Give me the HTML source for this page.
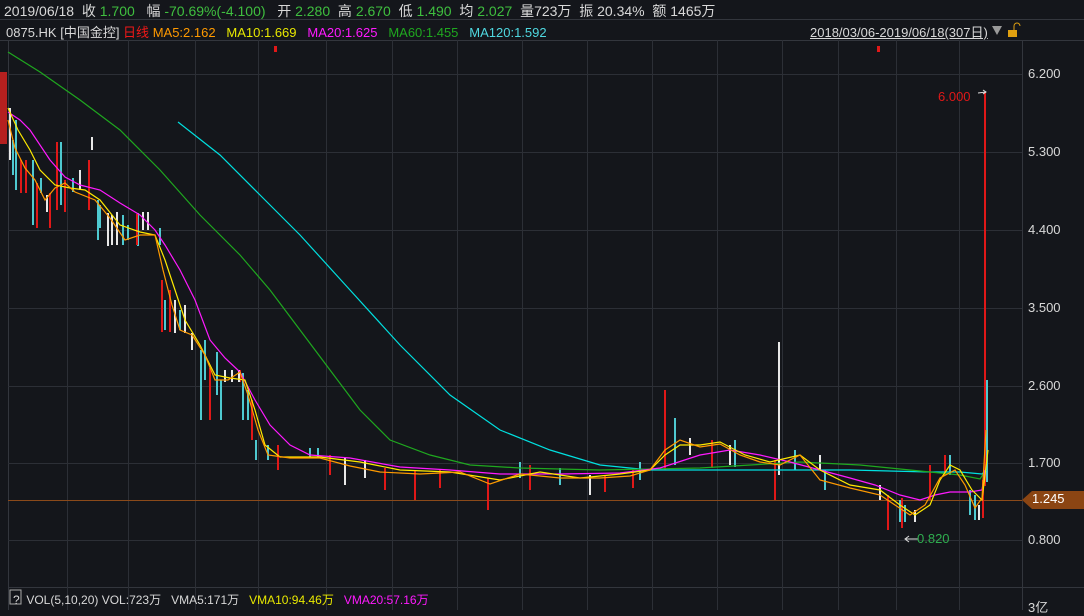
<!DOCTYPE html>
<html><head><meta charset="utf-8"><style>
body{margin:0;width:1084px;height:610px;background:#14161b;overflow:hidden;font-family:"Liberation Sans","Noto Sans CJK SC",sans-serif;color:#d8d8d8;position:relative}
.t{position:absolute;white-space:nowrap}
.g{color:#3fbf3f}
.ax{font-size:13px;left:1028px}
</style></head><body>
<svg width="1084" height="610" style="position:absolute;left:0;top:0">
<g stroke="#33363d" stroke-width="1">
<line x1="0" y1="19.5" x2="1084" y2="19.5"/>
<line x1="0" y1="40.5" x2="1084" y2="40.5"/>
<line x1="8.5" y1="40" x2="8.5" y2="610"/>
<line x1="1022.5" y1="40" x2="1022.5" y2="610"/>
<line x1="8" y1="587.5" x2="1084" y2="587.5"/>
</g>
<g stroke="#2c2f36" stroke-width="1">
<line x1="8" y1="74.5" x2="1022" y2="74.5"/><line x1="8" y1="152.5" x2="1022" y2="152.5"/>
<line x1="8" y1="230.5" x2="1022" y2="230.5"/><line x1="8" y1="308.5" x2="1022" y2="308.5"/>
<line x1="8" y1="386.5" x2="1022" y2="386.5"/><line x1="8" y1="463.5" x2="1022" y2="463.5"/>
<line x1="8" y1="540.5" x2="1022" y2="540.5"/>
<line x1="67.5" y1="40" x2="67.5" y2="610"/><line x1="128.5" y1="40" x2="128.5" y2="610"/>
<line x1="195.5" y1="40" x2="195.5" y2="610"/><line x1="258.5" y1="40" x2="258.5" y2="610"/>
<line x1="326.5" y1="40" x2="326.5" y2="610"/><line x1="392.5" y1="40" x2="392.5" y2="610"/>
<line x1="457.5" y1="40" x2="457.5" y2="610"/><line x1="522.5" y1="40" x2="522.5" y2="610"/>
<line x1="587.5" y1="40" x2="587.5" y2="610"/><line x1="652.5" y1="40" x2="652.5" y2="610"/>
<line x1="717.5" y1="40" x2="717.5" y2="610"/><line x1="782.5" y1="40" x2="782.5" y2="610"/>
<line x1="838.5" y1="40" x2="838.5" y2="610"/><line x1="896.5" y1="40" x2="896.5" y2="610"/>
<line x1="959.5" y1="40" x2="959.5" y2="610"/>
</g>
<rect x="0" y="72" width="7" height="72" fill="#b5201f"/>
<line x1="8" y1="500.5" x2="1022" y2="500.5" stroke="#8b4a1a"/>
<polygon points="1022,500 1032,491 1084,491 1084,509 1032,509" fill="#8b4513"/>
<g stroke-width="2">
<g stroke="#4ec9d0">
<line x1="13" y1="140" x2="13" y2="175"/><line x1="16" y1="120" x2="16" y2="190"/><line x1="33" y1="160" x2="33" y2="225"/><line x1="41" y1="178" x2="41" y2="193"/><line x1="61" y1="142" x2="61" y2="205"/><line x1="73" y1="178" x2="73" y2="192"/><line x1="98" y1="200" x2="98" y2="240"/><line x1="123" y1="215" x2="123" y2="245"/><line x1="138" y1="213" x2="138" y2="246"/><line x1="160" y1="228" x2="160" y2="245"/><line x1="201" y1="350" x2="201" y2="420"/><line x1="210" y1="370" x2="210" y2="420"/><line x1="217" y1="352" x2="217" y2="395"/><line x1="243" y1="373" x2="243" y2="420"/><line x1="256" y1="440" x2="256" y2="460"/><line x1="268" y1="445" x2="268" y2="460"/><line x1="310" y1="448" x2="310" y2="458"/><line x1="318" y1="448" x2="318" y2="457"/>
<line x1="100" y1="205" x2="100" y2="228"/><line x1="128" y1="225" x2="128" y2="240"/><line x1="165" y1="300" x2="165" y2="330"/><line x1="180" y1="310" x2="180" y2="330"/><line x1="205" y1="340" x2="205" y2="380"/><line x1="221" y1="380" x2="221" y2="420"/><line x1="248" y1="390" x2="248" y2="420"/>
<line x1="520" y1="462" x2="520" y2="478"/><line x1="560" y1="468" x2="560" y2="485"/><line x1="640" y1="462" x2="640" y2="480"/><line x1="675" y1="418" x2="675" y2="465"/><line x1="735" y1="440" x2="735" y2="467"/><line x1="795" y1="450" x2="795" y2="470"/><line x1="825" y1="470" x2="825" y2="490"/><line x1="900" y1="500" x2="900" y2="522"/><line x1="905" y1="505" x2="905" y2="522"/><line x1="950" y1="455" x2="950" y2="475"/><line x1="970" y1="490" x2="970" y2="515"/><line x1="975" y1="495" x2="975" y2="520"/><line x1="987" y1="380" x2="987" y2="482"/>
</g>
<g stroke="#e01818">
<line x1="21" y1="160" x2="21" y2="193"/><line x1="26" y1="160" x2="26" y2="193"/><line x1="37" y1="183" x2="37" y2="228"/><line x1="50" y1="193" x2="50" y2="228"/><line x1="57" y1="142" x2="57" y2="210"/><line x1="65" y1="180" x2="65" y2="212"/><line x1="89" y1="160" x2="89" y2="210"/><line x1="137" y1="214" x2="137" y2="245"/><line x1="162" y1="280" x2="162" y2="332"/><line x1="170" y1="290" x2="170" y2="332"/><line x1="210" y1="368" x2="210" y2="420"/><line x1="240" y1="370" x2="240" y2="382"/><line x1="252" y1="400" x2="252" y2="440"/><line x1="278" y1="445" x2="278" y2="470"/>
<line x1="330" y1="455" x2="330" y2="475"/><line x1="385" y1="468" x2="385" y2="490"/><line x1="415" y1="470" x2="415" y2="500"/><line x1="440" y1="470" x2="440" y2="488"/><line x1="488" y1="478" x2="488" y2="510"/><line x1="530" y1="465" x2="530" y2="490"/><line x1="605" y1="476" x2="605" y2="492"/><line x1="633" y1="470" x2="633" y2="488"/><line x1="665" y1="390" x2="665" y2="470"/><line x1="712" y1="440" x2="712" y2="468"/><line x1="775" y1="460" x2="775" y2="500"/><line x1="888" y1="495" x2="888" y2="530"/><line x1="902" y1="498" x2="902" y2="528"/><line x1="930" y1="465" x2="930" y2="500"/><line x1="945" y1="455" x2="945" y2="475"/><line x1="983" y1="480" x2="983" y2="518"/><line x1="985" y1="92" x2="985" y2="486"/>
</g>
<g stroke="#e8e8e8">
<line x1="10" y1="108" x2="10" y2="160"/><line x1="47" y1="195" x2="47" y2="212"/><line x1="80" y1="170" x2="80" y2="190"/><line x1="92" y1="137" x2="92" y2="150"/><line x1="108" y1="213" x2="108" y2="246"/><line x1="112" y1="215" x2="112" y2="245"/><line x1="117" y1="212" x2="117" y2="245"/><line x1="143" y1="212" x2="143" y2="230"/><line x1="148" y1="212" x2="148" y2="230"/><line x1="175" y1="300" x2="175" y2="333"/><line x1="185" y1="305" x2="185" y2="333"/><line x1="192" y1="333" x2="192" y2="350"/><line x1="225" y1="370" x2="225" y2="382"/><line x1="232" y1="370" x2="232" y2="382"/><line x1="239" y1="370" x2="239" y2="382"/><line x1="345" y1="458" x2="345" y2="485"/><line x1="365" y1="460" x2="365" y2="478"/><line x1="590" y1="475" x2="590" y2="495"/><line x1="690" y1="438" x2="690" y2="455"/><line x1="730" y1="445" x2="730" y2="465"/><line x1="779" y1="342" x2="779" y2="475"/><line x1="820" y1="455" x2="820" y2="470"/><line x1="880" y1="485" x2="880" y2="500"/><line x1="915" y1="510" x2="915" y2="522"/><line x1="979" y1="505" x2="979" y2="520"/>
</g>
</g>
<g fill="none" stroke-width="1.2">
<polyline stroke="#00e0e0" points="178,122 220,155 260,195 300,235 350,290 400,345 450,395 500,430 550,450 600,465 650,470 700,470 780,470 850,470 930,472 960,472 982,474 986,470"/>
<polyline stroke="#1fa81f" points="8,52 40,72 80,100 120,130 160,170 200,215 240,255 270,290 300,330 330,370 360,410 390,440 430,455 470,465 520,468 600,470 700,468 800,462 860,465 910,470 940,473 960,475 980,479 986,470"/>
<polyline stroke="#ff1aff" points="8,112 20,120 30,130 50,160 65,177 80,185 100,190 120,203 140,215 155,230 165,245 180,270 195,300 210,340 225,358 240,372 255,400 270,425 290,445 310,455 350,458 400,467 450,470 500,474 560,474 620,473 660,468 700,455 730,450 760,455 790,462 820,470 850,478 875,485 900,495 920,500 935,495 950,492 970,492 982,490 985,470"/>
<polyline stroke="#ffea00" points="8,108 18,130 30,150 40,170 55,185 70,188 85,190 100,200 120,225 140,232 155,235 165,260 175,290 185,320 200,345 215,375 230,378 245,380 255,410 265,445 280,457 320,457 360,462 400,470 450,472 500,480 540,472 580,478 620,474 650,470 665,455 680,445 700,445 720,442 745,455 770,462 800,455 820,470 850,485 880,490 900,505 915,515 930,505 940,480 950,465 960,470 972,490 982,500 988,450"/>
<polyline stroke="#ff9a00" points="8,120 15,148 25,168 35,180 45,200 55,188 65,183 75,192 95,200 110,218 125,240 140,235 155,235 163,270 172,305 180,330 192,335 205,355 215,380 228,380 240,372 248,395 258,430 268,455 290,458 320,458 350,466 380,472 420,474 460,472 490,484 520,474 560,478 600,478 630,476 650,470 665,450 680,440 700,447 720,444 740,455 760,462 780,465 800,455 820,480 850,488 880,495 895,505 910,515 925,505 940,478 955,470 965,485 975,508 982,498 986,430"/>
</g>
<polyline points="986,92 978,93" stroke="#ddd" fill="none"/>
<polyline points="983,90 986,92 983,94" stroke="#ddd" fill="none"/>
<line x1="906" y1="539" x2="918" y2="539" stroke="#ddd"/><polyline points="909,536 905,539 909,542" stroke="#ddd" fill="none"/>
<rect x="877" y="46" width="3" height="6" fill="#e01818"/><rect x="274" y="46" width="3" height="6" fill="#e01818"/>
<polygon points="992,26 1002,26 997,35" fill="#9a9a9a"/>
<rect x="1008" y="30" width="9" height="7" fill="#e0a010"/>
<path d="M1014,30 v-4 a3,3 0 0 1 6,0" stroke="#e0a010" fill="none"/>
<rect x="10" y="590" width="11" height="14" fill="none" stroke="#aaa"/>
</svg>
<div class="t" style="left:4px;top:1px;font-size:14px">2019/06/18 &nbsp;收 <span class="g">1.700</span> &nbsp; 幅 <span class="g">-70.69%(-4.100)</span> &nbsp; 开 <span class="g">2.280</span> &nbsp;高 <span class="g">2.670</span> &nbsp;低 <span class="g">1.490</span> &nbsp;均 <span class="g">2.027</span> &nbsp;量723万 &nbsp;振 20.34% &nbsp;额 1465万</div>
<div class="t" style="left:6px;top:22px;font-size:13px">0875.HK [中国金控] <span style="color:#f01818">日线</span> <span style="color:#ff9a00">MA5:2.162</span> &nbsp;&nbsp;<span style="color:#e8e800">MA10:1.669</span> &nbsp;&nbsp;<span style="color:#ff1aff">MA20:1.625</span> &nbsp;&nbsp;<span style="color:#1fa81f">MA60:1.455</span> &nbsp;&nbsp;<span style="color:#4fd8e0">MA120:1.592</span></div>
<div class="t" style="left:810px;top:22px;font-size:13px;text-decoration:underline">2018/03/06-2019/06/18(307日)</div>
<div class="t ax" style="top:66px">6.200</div>
<div class="t ax" style="top:144px">5.300</div>
<div class="t ax" style="top:222px">4.400</div>
<div class="t ax" style="top:300px">3.500</div>
<div class="t ax" style="top:378px">2.600</div>
<div class="t ax" style="top:455px">1.700</div>
<div class="t" style="left:1032px;top:491px;font-size:13px;color:#fff">1.245</div>
<div class="t ax" style="top:532px">0.800</div>
<div class="t ax" style="top:597px">3亿</div>
<div class="t" style="left:938px;top:89px;font-size:13px;color:#e01818">6.000</div>
<div class="t" style="left:917px;top:531px;font-size:13px;color:#2fae4f">0.820</div>
<div class="t" style="left:13px;top:591px;font-size:12px">? &nbsp;VOL(5,10,20) VOL:723万 &nbsp;&nbsp;VMA5:171万 &nbsp;&nbsp;<span style="color:#e8e800">VMA10:94.46万</span> &nbsp;&nbsp;<span style="color:#ff1aff">VMA20:57.16万</span></div>
</body></html>
